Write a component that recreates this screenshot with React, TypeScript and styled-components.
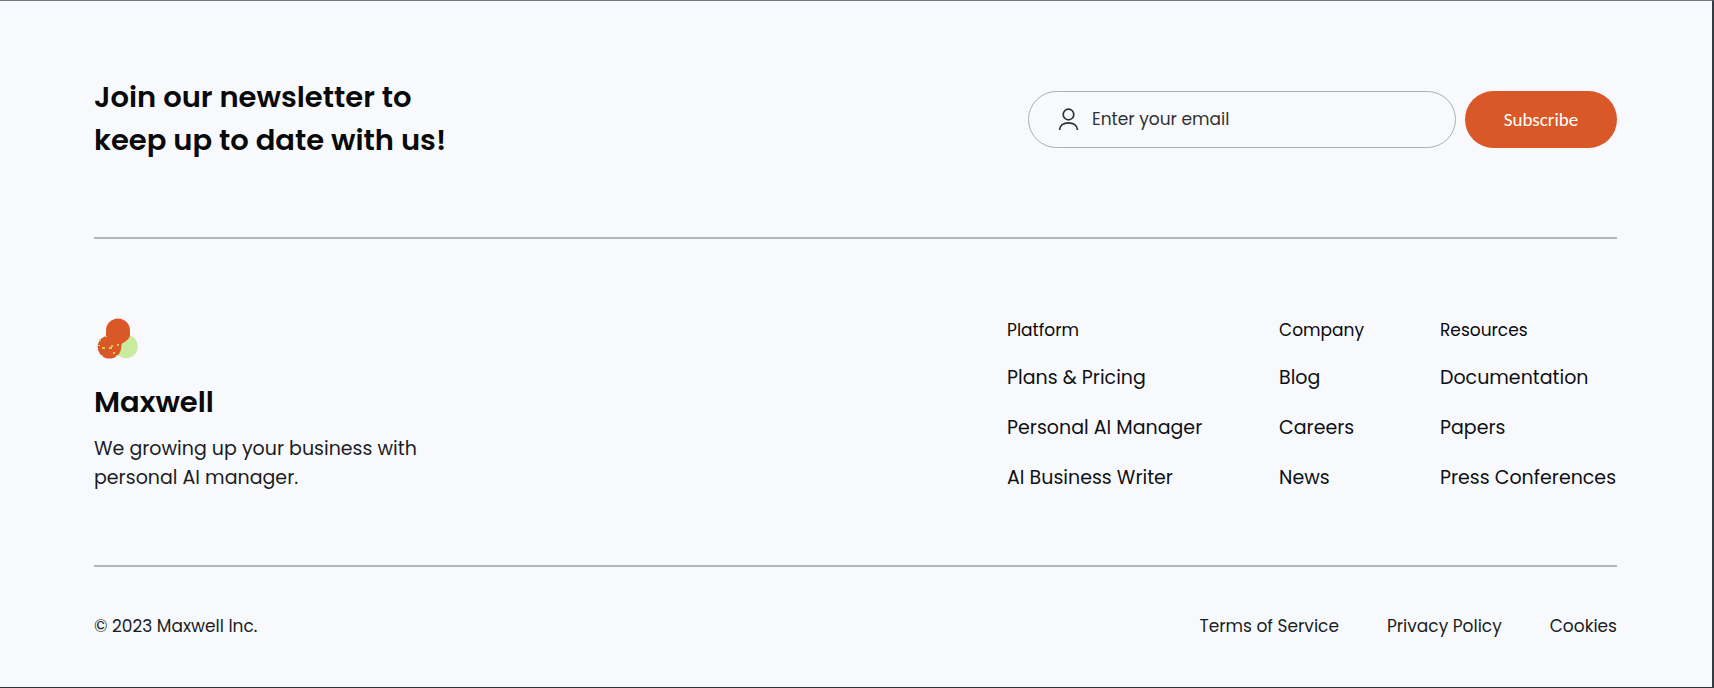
import React from "react";
import styled, { createGlobalStyle } from "styled-components";

const GlobalStyle = createGlobalStyle`
  *, *::before, *::after { box-sizing: border-box; }
  body {
    margin: 0;
    background: #f8f9fd;
    color: #0a0a0a;
    font-family: Poppins, Inter, sans-serif;
    font-size: 17px;
  }
`;

const Footer = styled.footer`
  min-height: 100vh;
  padding: 0 95px 0 94px;
  border-top: 1px solid #747681;
  border-right: 2px solid #363a43;
  border-bottom: 1px solid #2f333b;
`;

const Newsletter = styled.section`
  display: flex;
  align-items: center;
  justify-content: space-between;
  gap: 32px;
  padding: 75px 0;
  border-bottom: 2px solid #b3b6b9;
`;

const Title = styled.h2`
  margin: 0;
  max-width: 400px;
  font-size: 29px;
  line-height: 43px;
  font-weight: 600;
`;

const Form = styled.form`
  display: flex;
  gap: 9px;
  flex: 0 1 589px;
`;

const Field = styled.label`
  display: flex;
  align-items: center;
  gap: 11px;
  flex: 1;
  min-width: 0;
  height: 57px;
  padding: 0 28px;
  border: 1px solid #acafb3;
  border-radius: 29px;
`;

const EmailInput = styled.input`
  flex: 1;
  min-width: 0;
  padding: 0;
  border: 0;
  outline: 0;
  background: transparent;
  color: #2b2c2f;
  font: inherit;

  &::placeholder {
    color: #303134;
    opacity: 1;
  }
`;

const SubscribeButton = styled.button`
  flex: none;
  height: 57px;
  width: 152px;
  padding: 0;
  border: 0;
  border-radius: 29px;
  background: #da5827;
  color: #fff;
  font-family: Carlito, "Noto Sans", sans-serif;
  font-size: 19px;
  cursor: pointer;
`;

const Main = styled.section`
  display: flex;
  justify-content: space-between;
  gap: 48px;
  padding: 79px 0 72px;
  border-bottom: 2px solid #b3b6b9;
`;

const Brand = styled.div`
  max-width: 360px;
`;

const Logo = styled.svg`
  display: block;
  margin: 0 0 22px 3px;
`;

const BrandName = styled.h2`
  margin: 0 0 10px;
  font-size: 29px;
  line-height: 43px;
  font-weight: 600;
`;

const Tagline = styled.p`
  margin: 0;
  color: #1c1d1f;
  font-size: 19px;
  line-height: 29px;
`;

const Columns = styled.nav`
  display: flex;
  gap: 76px;
`;

const Column = styled.div<{ $width: number }>`
  min-width: ${({ $width }) => $width}px;
`;

const ColumnTitle = styled.h3`
  margin: 0 0 21px;
  font-size: 17px;
  line-height: 24px;
  font-weight: 400;
`;

const LinkList = styled.ul`
  display: grid;
  gap: 20px;
  margin: 0;
  padding: 0;
  list-style: none;
`;

const ColumnLink = styled.a`
  display: block;
  color: #0f1012;
  font-size: 19px;
  line-height: 30px;
  text-decoration: none;
  white-space: nowrap;
`;

const Bottom = styled.section`
  display: flex;
  align-items: center;
  justify-content: space-between;
  gap: 32px;
  padding: 47px 0 44px;
  color: #1c1d1f;
  line-height: 24px;
`;

const Legal = styled.nav`
  display: flex;
  gap: 48px;
`;

const LegalLink = styled.a`
  color: inherit;
  text-decoration: none;
`;

const columns = [
  { title: "Platform", width: 196, links: ["Plans & Pricing", "Personal AI Manager", "AI Business Writer"] },
  { title: "Company", width: 84, links: ["Blog", "Careers", "News"] },
  { title: "Resources", width: 177, links: ["Documentation", "Papers", "Press Conferences"] },
];

const legal = ["Terms of Service", "Privacy Policy", "Cookies"];

const UserIcon = () => (
  <svg width="24" height="24" viewBox="0 0 24 24" fill="none" stroke="#303134" strokeWidth="1.7" aria-hidden="true">
    <circle cx="11.5" cy="7.500" r="5.3" />
    <path d="M2.600 23v-.4c0-4.200 4-6.800 8.900-6.800s8.900 2.600 8.900 6.800v.4" />
  </svg>
);

const BrandLogo = () => (
  <Logo width="41" height="41" viewBox="0 0 41 41" role="img" aria-label="Maxwell logo">
    <circle cx="29" cy="28.500" r="11.800" fill="#c9eb9e" />
    <ellipse cx="12.500" cy="29" rx="11.800" ry="11.500" fill="#da5827" />
    <path d="M9 12.500a12 12 0 0 1 24 0v4c0 4-4 7-8 9l-2 5-6-5-8-7z" fill="#da5827" />
    <g fill="#c3d65c">
      <rect x="2" y="21" width="2" height="2" />
      <rect x="1" y="27" width="2" height="1" />
      <rect x="5" y="29" width="3" height="2" />
      <rect x="12" y="29" width="3" height="2" />
      <rect x="14" y="27" width="2" height="2" />
      <rect x="16" y="34" width="2" height="2" />
      <rect x="20" y="26" width="2" height="2" />
      <rect x="19" y="37" width="2" height="1" />
      <rect x="4" y="37" width="2" height="1" />
      <rect x="8" y="18" width="2" height="1" />
    </g>
  </Logo>
);

export default function App() {
  return (
    <>
      <GlobalStyle />
      <Footer>
        <Newsletter>
          <Title>
            Join our newsletter to
            <br />
            keep up to date with us!
          </Title>
          <Form onSubmit={(event) => event.preventDefault()}>
            <Field>
              <UserIcon />
              <EmailInput type="email" placeholder="Enter your email" aria-label="Email address" />
            </Field>
            <SubscribeButton type="submit">Subscribe</SubscribeButton>
          </Form>
        </Newsletter>
        <Main>
          <Brand>
            <BrandLogo />
            <BrandName>Maxwell</BrandName>
            <Tagline>
              We growing up your business with
              <br />
              personal AI manager.
            </Tagline>
          </Brand>
          <Columns aria-label="Footer">
            {columns.map((column) => (
              <Column key={column.title} $width={column.width}>
                <ColumnTitle>{column.title}</ColumnTitle>
                <LinkList>
                  {column.links.map((link) => (
                    <li key={link}>
                      <ColumnLink href="#">{link}</ColumnLink>
                    </li>
                  ))}
                </LinkList>
              </Column>
            ))}
          </Columns>
        </Main>
        <Bottom>
          <span>© 2023 Maxwell Inc.</span>
          <Legal aria-label="Legal">
            {legal.map((item) => (
              <LegalLink key={item} href="#">
                {item}
              </LegalLink>
            ))}
          </Legal>
        </Bottom>
      </Footer>
    </>
  );
}
